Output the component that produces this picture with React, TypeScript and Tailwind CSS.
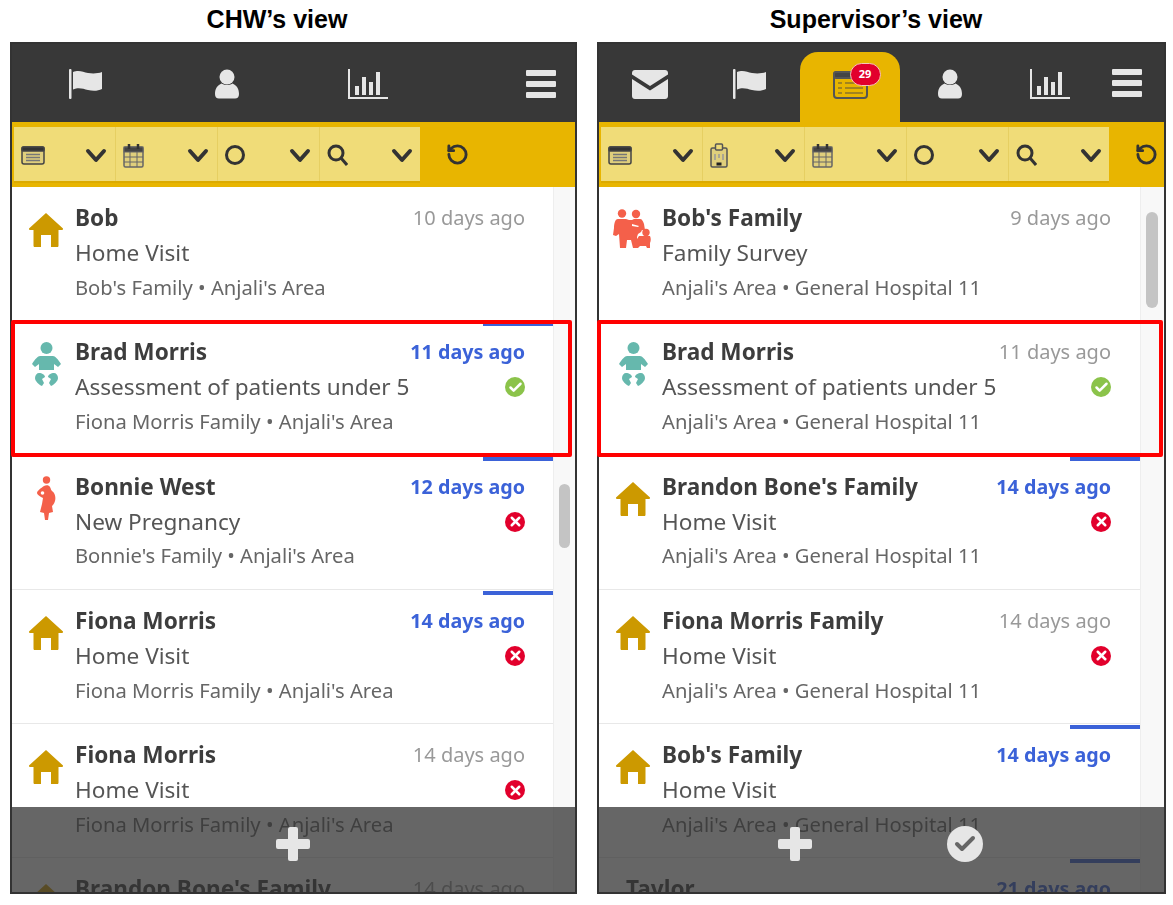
import type { ReactNode } from "react";
import { Check, RotateCcw, X } from "lucide-react";

type Kind = "home" | "baby" | "pregnant" | "family" | "none";

type Row = {
  kind: Kind;
  name: string;
  task: string;
  meta: string;
  date: string;
  late?: boolean;
  status?: "ok" | "bad";
};

const chwRows: Row[] = [
  { kind: "home", name: "Bob", task: "Home Visit", meta: "Bob's Family • Anjali's Area", date: "10 days ago" },
  { kind: "baby", name: "Brad Morris", task: "Assessment of patients under 5", meta: "Fiona Morris Family • Anjali's Area", date: "11 days ago", late: true, status: "ok" },
  { kind: "pregnant", name: "Bonnie West", task: "New Pregnancy", meta: "Bonnie's Family • Anjali's Area", date: "12 days ago", late: true, status: "bad" },
  { kind: "home", name: "Fiona Morris", task: "Home Visit", meta: "Fiona Morris Family • Anjali's Area", date: "14 days ago", late: true, status: "bad" },
  { kind: "home", name: "Fiona Morris", task: "Home Visit", meta: "Fiona Morris Family • Anjali's Area", date: "14 days ago", status: "bad" },
  { kind: "home", name: "Brandon Bone's Family", task: "Home Visit", meta: "Anjali's Area", date: "14 days ago" },
];

const supervisorRows: Row[] = [
  { kind: "family", name: "Bob's Family", task: "Family Survey", meta: "Anjali's Area • General Hospital 11", date: "9 days ago" },
  { kind: "baby", name: "Brad Morris", task: "Assessment of patients under 5", meta: "Anjali's Area • General Hospital 11", date: "11 days ago", status: "ok" },
  { kind: "home", name: "Brandon Bone's Family", task: "Home Visit", meta: "Anjali's Area • General Hospital 11", date: "14 days ago", late: true, status: "bad" },
  { kind: "home", name: "Fiona Morris Family", task: "Home Visit", meta: "Anjali's Area • General Hospital 11", date: "14 days ago", status: "bad" },
  { kind: "home", name: "Bob's Family", task: "Home Visit", meta: "Anjali's Area • General Hospital 11", date: "14 days ago", late: true },
  { kind: "none", name: "Taylor", task: "Home Visit", meta: "Anjali's Area", date: "21 days ago", late: true },
];

function FlagIcon() {
  return (
    <svg width="34" height="30" viewBox="0 0 34 30" fill="#e6e6e6">
      <rect x="0" y="0" width="2.5" height="30" rx="1" />
      <path d="M4 3c6-2.500 10 0 15 1 5 .8 10 .5 14-1v17c-4 2-9 2.200-14 1-5-1-9-3-15-.5z" />
    </svg>
  );
}

function PersonIcon() {
  return (
    <svg width="26" height="30" viewBox="0 0 26 30" fill="#e6e6e6">
      <circle cx="13" cy="8" r="7.500" />
      <path d="M1 25c0-6 3-9 6.500-10.500 3.500 2 7.500 2 11 0C22 16 25 19 25 25c0 3-1.500 4.500-4 4.500H5c-2.500 0-4-1.500-4-4.500z" />
    </svg>
  );
}

function ChartIcon() {
  return (
    <svg width="40" height="30" viewBox="0 0 40 30" fill="#e6e6e6">
      <rect x="0" y="0" width="2" height="30" />
      <rect x="0" y="28" width="40" height="2" />
      <rect x="7" y="17" width="4" height="9" />
      <rect x="14" y="8" width="4" height="18" />
      <rect x="21" y="13" width="4" height="13" />
      <rect x="28" y="3" width="4" height="23" />
    </svg>
  );
}

function MenuIcon() {
  return (
    <div className="flex w-[30px] flex-col gap-[5px]">
      <div className="h-[6px] rounded-[1px] bg-[#e6e6e6]" />
      <div className="h-[6px] rounded-[1px] bg-[#e6e6e6]" />
      <div className="h-[6px] rounded-[1px] bg-[#e6e6e6]" />
    </div>
  );
}

function MailIcon() {
  return (
    <svg width="36" height="29" viewBox="0 0 36 29" fill="#e6e6e6">
      <path d="M3 0h30c1.700 0 3 1.300 3 3v1.500L18 16 0 4.500V3c0-1.700 1.300-3 3-3z" />
      <path d="M0 9l18 11.500L36 9v17c0 1.700-1.300 3-3 3H3c-1.700 0-3-1.300-3-3z" />
    </svg>
  );
}

function TasksIcon() {
  return (
    <div className="relative">
      <svg width="35" height="28" viewBox="0 0 35 28" fill="none" stroke="#555" strokeWidth="2">
        <rect x="1" y="1" width="33" height="26" rx="3" fill="#e8b500" />
        <rect x="1" y="1" width="33" height="6" rx="2" fill="#444" />
        <path d="M5 12h4M12 12h18M5 17h4M12 17h18M5 22h4M12 22h18" stroke="#8a7428" strokeWidth="1.500" />
      </svg>
      <span className="absolute left-[17px] top-[-8px] flex h-[23px] w-[31px] items-center justify-center rounded-[12px] border border-[#f5c8b8] bg-[#e2002c] font-['Noto_Sans',sans-serif] text-[11px] font-bold text-white">
        29
      </span>
    </div>
  );
}

function FormIcon() {
  return (
    <svg width="24" height="19" viewBox="0 0 24 19" fill="none" stroke="#444" strokeWidth="1.500">
      <rect x="1" y="1" width="22" height="17" rx="2" fill="#e0cf7c" />
      <rect x="1" y="1" width="22" height="4" rx="1" fill="#333" />
      <path d="M5 8.500h14M5 11.500h14M5 14.500h14" stroke="#777" />
    </svg>
  );
}

function ClipboardIcon() {
  return (
    <svg width="18" height="25" viewBox="0 0 18 25" fill="none" stroke="#555" strokeWidth="1.500">
      <rect x="1" y="5" width="16" height="19" rx="1.500" fill="#e0cf7c" />
      <rect x="5.500" y="1" width="7" height="6" rx="1" fill="#f0dc78" />
      <path d="M5 11v6M13 11v6M9 11v4" stroke="#999" />
      <rect x="6.500" y="19.500" width="5" height="3" fill="#222" stroke="none" />
    </svg>
  );
}

function CalendarIcon() {
  return (
    <svg width="21" height="25" viewBox="0 0 21 25" fill="none" stroke="#666" strokeWidth="1">
      <rect x="1" y="4" width="19" height="20" rx="1.500" fill="#e0cf7c" strokeWidth="1.500" />
      <rect x="1" y="4" width="19" height="5" fill="#444" />
      <path d="M1 14h19M1 19h19M7 9v15M14 9v15" />
      <path d="M6 1v5M15 1v5" stroke="#333" strokeWidth="2.500" />
    </svg>
  );
}

function RingIcon() {
  return <div className="h-[20px] w-[20px] rounded-full border-[3px] border-[#333]" />;
}

function SearchIcon() {
  return (
    <svg width="21" height="22" viewBox="0 0 21 22" fill="none" stroke="#333" strokeWidth="3">
      <circle cx="9" cy="9" r="7" />
      <path d="M14 14l6 7" />
    </svg>
  );
}

function Chevron() {
  return (
    <svg width="22" height="15" viewBox="0 0 22 15" fill="none" stroke="#333" strokeWidth="4" strokeLinecap="round" strokeLinejoin="round">
      <path d="M3 3l8 9 8-9" />
    </svg>
  );
}

function HomeIcon() {
  return (
    <svg width="34" height="34" viewBox="0 0 34 34" fill="#cc9900">
      <path d="M17 0l17 15.500c.500 1-.300 1.500-1 1.500h-3.500v15.500c0 1-.500 1.500-1.500 1.500h-6V22h-10v12H6c-1 0-1.500-.500-1.500-1.500V17H1c-.700 0-1.500-.500-1-1.500z" />
    </svg>
  );
}

function BabyIcon() {
  return (
    <svg width="29" height="45" viewBox="0 0 29 45" fill="#66b8ad">
      <circle cx="14.500" cy="6" r="6" />
      <path d="M8 14h13c2 0 5 3 8 8l-3 3-4-3v6H7v-6l-4 3-3-3c3-5 6-8 8-8z" />
      <path d="M7 31c3 0 6 2 6 4l-3 2 2 4-2 3c-3-1-7-5-7-8 0-3 2-5 4-5z" />
      <path d="M22 31c-3 0-6 2-6 4l3 2-2 4 2 3c3-1 7-5 7-8 0-3-2-5-4-5z" />
    </svg>
  );
}

function PregnantIcon() {
  return (
    <svg width="20" height="45" viewBox="0 0 20 45" fill="#f4604a">
      <circle cx="10.500" cy="4" r="3.700" />
      <path d="M8 10c2-1 5-1 6 1 1 2 1 3 2 4 3 2 4 6 3 10-1 3-2 4-3 5l1 6-4 1-1 7h-3l-1-7-4-1 2-8 1-6-2-1c-2-1-4-3-4-4 0-2 4-5 7-7z" />
      <circle cx="6.500" cy="17" r="1.800" fill="#fff" />
    </svg>
  );
}

function FamilyIcon() {
  return (
    <svg width="38" height="41" viewBox="0 0 38 41" fill="#f4604a">
      <circle cx="9" cy="4.500" r="4.200" />
      <circle cx="23" cy="5" r="4.200" />
      <circle cx="33" cy="23.500" r="3.700" />
      <path d="M5 10h8l3 1h3l2-1h6c2 0 3 2 4 5l1 6-3 0-1 2-3 2-1 3v11h-4l-2-8h-4l-1 8H7l-1-14-3 2-3-1 1-7c0-4 1-9 4-9z" />
      <path d="M26 27h11c1 2 1 5 0 7v5h-3l-1-2h-6l-2 2h-3v-6z" />
      <path d="M19 15l7 2-1 1-6-1z" fill="#fff" />
    </svg>
  );
}

function KindIcon({ kind }: { kind: Kind }) {
  if (kind === "home") return <div className="mt-[26px]"><HomeIcon /></div>;
  if (kind === "baby") return <div className="ml-[3px] mt-[21px]"><BabyIcon /></div>;
  if (kind === "pregnant") return <div className="ml-[7px] mt-[20px]"><PregnantIcon /></div>;
  if (kind === "family") return <div className="ml-[-3px] mt-[22px]"><FamilyIcon /></div>;
  return null;
}

function StatusIcon({ status }: { status: "ok" | "bad" }) {
  if (status === "ok") {
    return (
      <div className="flex h-[20px] w-[20px] items-center justify-center rounded-full bg-[#8bc34a]">
        <Check size={15} strokeWidth={4} color="#fff" />
      </div>
    );
  }
  return (
    <div className="flex h-[20px] w-[20px] items-center justify-center rounded-full bg-[#e2002c]">
      <X size={15} strokeWidth={4} color="#fff" />
    </div>
  );
}

function ListRow({ row, supervisor }: { row: Row; supervisor?: boolean }) {
  return (
    <div className={`relative flex h-[134.25px] border-b border-[#e8e8e8] ${supervisor ? "pr-[29px]" : "pr-[28px]"}`}>
      {row.late && <div className="absolute right-0 top-[1px] h-[4px] w-[70px] bg-[#3b62d8]" />}
      {row.kind === "none" ? (
        <div className="w-[27px] shrink-0" />
      ) : (
        <div className="ml-[17px] mr-[11px] w-[35px] shrink-0">
          <KindIcon kind={row.kind} />
        </div>
      )}
      <div className="min-w-0 flex-1 pt-[15px]">
        <div className="flex h-[30px] items-center justify-between">
          <span className="mt-[2px] text-[22.6px] font-bold text-[#3d3d3d]">{row.name}</span>
          {row.late ? (
            <span className="mt-[2px] text-[19.7px] font-bold text-[#3b62d8]">{row.date}</span>
          ) : (
            <span className="mt-[2px] text-[20px] text-[#999]">{row.date}</span>
          )}
        </div>
        <div className="mt-[6px] flex h-[30px] items-center justify-between">
          <span className="text-[22.6px] text-[#555]">{row.task}</span>
          {row.status && <StatusIcon status={row.status} />}
        </div>
        <div className="mt-[4px] flex h-[30px] items-center">
          <span className="text-[20.2px] text-[#666]">{row.meta}</span>
        </div>
      </div>
    </div>
  );
}

function NavTab({ width, active, children }: { width: string; active?: boolean; children: ReactNode }) {
  return (
    <div className={`flex h-full items-center justify-center ${width} ${active ? "rounded-t-[18px] bg-[#e8b500]" : ""}`}>
      {children}
    </div>
  );
}

function FilterCell({ icon }: { icon: ReactNode }) {
  return (
    <div className="flex h-full w-[102px] items-center justify-between border-r border-[#e6cf62] pl-[7px] pr-[8px] pt-[2px] last:w-[100px] last:border-r-0 last:pr-[7px]">
      {icon}
      <Chevron />
    </div>
  );
}

function Phone({ supervisor, rows }: { supervisor?: boolean; rows: Row[] }) {
  return (
    <div className={`relative h-[852px] border-2 border-[#333] bg-white ${supervisor ? "w-[569px]" : "w-[567px]"}`}>
      <div className="flex h-full flex-col overflow-hidden blur-[0.5px]">
        {supervisor ? (
          <div className="flex h-[78px] shrink-0 items-end bg-[#383838] pl-[1px]">
            <div className="flex h-[70px] items-center">
              <NavTab width="w-[100px]"><div className="pb-[6px]"><MailIcon /></div></NavTab>
              <NavTab width="w-[100px]"><div className="pb-[6px]"><FlagIcon /></div></NavTab>
              <NavTab width="w-[100px]" active><div className="pb-[4px]"><TasksIcon /></div></NavTab>
              <NavTab width="w-[100px]"><div className="pb-[6px]"><PersonIcon /></div></NavTab>
              <NavTab width="w-[100px]"><div className="pb-[6px]"><ChartIcon /></div></NavTab>
              <div className="ml-[12px] pb-[8px]"><MenuIcon /></div>
            </div>
          </div>
        ) : (
          <div className="flex h-[78px] shrink-0 items-center bg-[#383838] pl-[3px] pt-[2px]">
            <NavTab width="w-[141px]"><FlagIcon /></NavTab>
            <NavTab width="w-[141px]"><PersonIcon /></NavTab>
            <NavTab width="w-[141px]"><ChartIcon /></NavTab>
            <div className="ml-[88px]"><MenuIcon /></div>
          </div>
        )}

        <div className="flex h-[65px] shrink-0 items-start bg-[#e8b500] pl-[2px] pt-[5px]">
          <div className="flex h-[56px] border-b-[2px] border-[#dcab00] bg-[#f0dc78]">
            <FilterCell icon={<FormIcon />} />
            {supervisor && <FilterCell icon={<ClipboardIcon />} />}
            <FilterCell icon={<CalendarIcon />} />
            <FilterCell icon={<RingIcon />} />
            <FilterCell icon={<SearchIcon />} />
          </div>
          <div className={`pt-[16px] ${supervisor ? "ml-[26px]" : "ml-[26px]"}`}>
            <RotateCcw size={23} strokeWidth={3} color="#333" />
          </div>
        </div>

        <div className="relative flex min-h-0 flex-1">
          <div className="min-w-0 flex-1 overflow-hidden font-['Noto_Sans',sans-serif]">
            {rows.map((row, i) => (
              <ListRow key={i} row={row} supervisor={supervisor} />
            ))}
          </div>
          <div className={`shrink-0 border-l border-[#eee] bg-[#f8f8f8] ${supervisor ? "w-[24px] pl-[5px] pr-[6px] pt-[25px]" : "w-[22px] pl-[5px] pr-[5px] pt-[297px]"}`}>
            <div className={`rounded-full bg-[#c4c4c4] ${supervisor ? "h-[96px]" : "h-[64px]"}`} />
          </div>

          <div className="absolute inset-x-0 bottom-0 flex h-[85px] items-center bg-[#333]/75 pb-[12px]">
            <div className={`flex h-[34px] w-[34px] items-center justify-center ${supervisor ? "ml-[179px]" : "ml-[264px]"}`}>
              <div className="relative h-[34px] w-[34px]">
                <div className="absolute left-[12px] top-0 h-[34px] w-[10px] rounded-[2px] bg-[#e6e6e6]" />
                <div className="absolute left-0 top-[12px] h-[10px] w-[34px] rounded-[2px] bg-[#e6e6e6]" />
              </div>
            </div>
            {supervisor && (
              <div className="ml-[135px] flex h-[36px] w-[36px] items-center justify-center rounded-full bg-[#e6e6e6]">
                <Check size={24} strokeWidth={4} color="#666" />
              </div>
            )}
          </div>
        </div>
      </div>

      {/* annotation over the Brad Morris row */}
      <div className={`absolute top-[276px] h-[137px] rounded-[2px] border-[4px] border-[#f00] ${supervisor ? "left-[-2px] w-[566px]" : "left-[-1px] w-[561px]"}`} />
    </div>
  );
}

export default function App() {
  return (
    <div className="min-h-[905px] bg-white pl-[10px] font-['Liberation_Sans',sans-serif]">
      <div className="flex gap-[20px]">
        <div>
          <div className="flex h-[42px] w-[534px] items-center justify-center pb-[3px] text-[25px] font-bold text-black">CHW’s view</div>
          <Phone rows={chwRows} />
        </div>
        <div>
          <div className="flex h-[42px] w-[558px] items-center justify-center pb-[3px] text-[25px] font-bold text-black">Supervisor’s view</div>
          <Phone supervisor rows={supervisorRows} />
        </div>
      </div>
    </div>
  );
}
